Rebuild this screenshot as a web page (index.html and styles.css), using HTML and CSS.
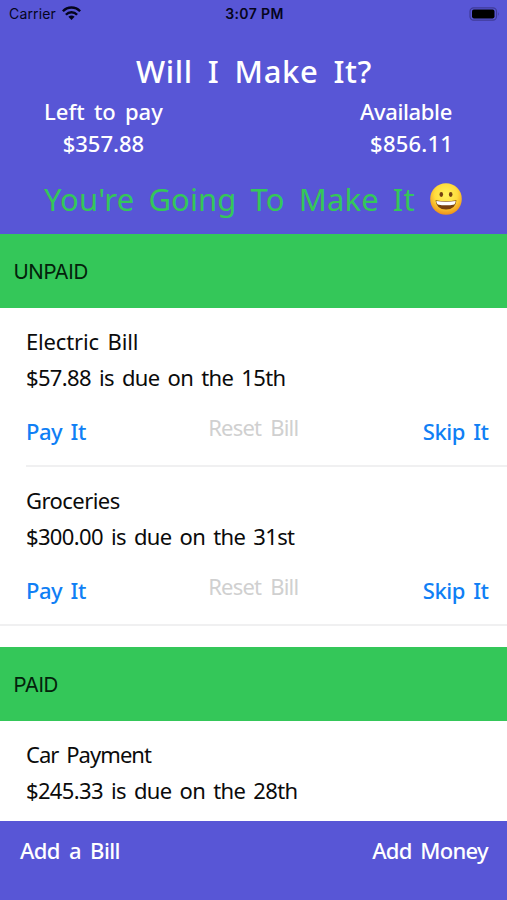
FILE: index.html
```html
<!DOCTYPE html>
<html lang="en">
<head>
<meta charset="utf-8">
<title>Will I Make It?</title>
<link rel="stylesheet" href="styles.css">
</head>
<body>
<div class="app">
  <header class="header">
    <div class="status">
      <div class="carrier"><span>Carrier</span>
        <svg class="wifi" viewBox="0 0 19 14" width="19" height="14"><g fill="none" stroke="#05051c" stroke-width="2.4"><path d="M.9 5.2C5.600.200 13.400.200 18.100 5.200"/><path d="M3.900 8.700C7 5.400 12 5.400 15.100 8.700"/></g><path d="M6.400 10.700Q9.500 8.100 12.600 10.700L9.500 14Z" fill="#05051c"/></svg>
      </div>
      <div class="time">3:07 PM</div>
      <svg class="battery" viewBox="0 0 31 14" width="31" height="14"><rect x="1" y=".8" width="26.500" height="12.400" rx="3.600" fill="none" stroke="#3f3b98" stroke-width="1.200"/><rect x="3" y="2.600" width="22.500" height="8.800" rx="1.800" fill="#000"/><path d="M29 5q1.500 2 0 4z" fill="#3f3b98"/></svg>
    </div>
    <h1 class="title">Will I Make It?</h1>
    <div class="stats">
      <div class="stat stat-left"><div class="left-label">Left to pay</div><div class="left-value">$357.88</div></div>
      <div class="stat stat-right"><div class="right-label">Available</div><div class="right-value">$856.11</div></div>
    </div>
    <div class="message"><span class="message-text">You're Going To Make It</span>
      <svg class="smile" viewBox="0 0 34 34" width="34" height="34"><defs><radialGradient id="face" cx=".5" cy=".36" r=".65"><stop offset="0" stop-color="#fff35c"/><stop offset=".55" stop-color="#ffdc3d"/><stop offset="1" stop-color="#ee8e18"/></radialGradient></defs><circle cx="17" cy="17" r="15.800" fill="url(#face)"/><ellipse cx="12.300" cy="12.500" rx="1.800" ry="2.400" fill="#744212"/><ellipse cx="21.700" cy="12.500" rx="1.800" ry="2.400" fill="#744212"/><path d="M6.500 18.300Q17 20 27.500 18.300Q26.500 27.600 17 27.600T6.500 18.300Z" fill="#77410f"/><path d="M7.300 18.900Q17 20.400 26.700 18.900Q26.500 21.600 25.300 22.500Q17 24.200 8.700 22.500Q7.500 21.600 7.300 18.900Z" fill="#fff"/></svg>
    </div>
  </header>
  <main class="list">
    <h2 class="section">UNPAID</h2>
    <article class="bill">
      <div class="line electric">Electric Bill</div>
      <div class="line due">$57.88 is due on the 15th</div>
      <div class="actions"><span class="pay">Pay It</span><span class="reset">Reset Bill</span><span class="skip">Skip It</span></div>
    </article>
    <article class="bill bill-last">
      <div class="line groceries">Groceries</div>
      <div class="line due">$300.00 is due on the 31st</div>
      <div class="actions"><span class="pay">Pay It</span><span class="reset">Reset Bill</span><span class="skip">Skip It</span></div>
    </article>
    <h2 class="section section-paid">PAID</h2>
    <article class="bill bill-cut">
      <div class="line car">Car Payment</div>
      <div class="line due">$245.33 is due on the 28th</div>
    </article>
  </main>
  <footer class="footer"><span class="add-bill">Add a Bill</span><span class="add-money">Add Money</span></footer>
</div>
</body>
</html>
```
FILE: styles.css
```css
* { box-sizing: border-box; }
body { margin: 0; background: #fff; }
.app {
  width: 507px; height: 900px; overflow: hidden;
  display: flex; flex-direction: column;
  font: 400 22px/36px "Chalkboard SE", "Noto Sans", sans-serif;
  color: #0b0b0b; white-space: nowrap;
}
h1, h2 { margin: 0; font-weight: 400; }
.header { height: 234px; flex: none; background: #5856d6; color: #fff; }
.status {
  height: 28px; padding: 0 7px 0 9px;
  display: grid; grid-template-columns: 1fr auto 1fr; align-items: center;
  font: 400 14px/28px Inter, sans-serif; color: #05051c;
}
.carrier { display: flex; align-items: center; gap: 6px; letter-spacing: .15px; }
.wifi { margin-top: -2px; }
.time { font-weight: 600; letter-spacing: .4px; }
.battery { justify-self: end; margin-top: -1px; }
.title {
  padding: 23px 0 0 136px;
  font-size: 31px; line-height: 40px; font-weight: 500;
  letter-spacing: .6px; word-spacing: 6.500px;
}
.stats {
  display: flex; justify-content: space-between;
  padding: 4px 54px 0 44px; line-height: 32px; font-weight: 500;
}
.stat-left { text-align: center; }
.stat-right { text-align: right; }
.left-label { word-spacing: 3.500px; }
.right-label { letter-spacing: -.35px; padding-right: 1px; }
.right-value { letter-spacing: .2px; }
.message {
  display: flex; align-items: center; justify-content: space-between;
  padding: 0 44px; margin-top: 20px;
  font-size: 31px; line-height: 40px; color: #34c759;
}
.message-text { letter-spacing: .1px; word-spacing: 6px; }
.section {
  height: 73.500px; padding-left: 13.500px; background: #34c759; color: #03220b;
  font: 400 20.500px/75px Inter, sans-serif; letter-spacing: -.4px;
}
.section-paid { margin-top: 21.500px; }
.bill { height: 159px; margin-left: 26px; padding-top: 15.500px; border-bottom: 2px solid #f0f0f1; }
.bill-last { margin-left: 0; padding-left: 26px; }
.bill-cut { height: 100px; border: 0; }
.electric { letter-spacing: -.15px; word-spacing: 3px; }
.due { letter-spacing: -.65px; word-spacing: 3px; }
.groceries { letter-spacing: -.55px; }
.car { letter-spacing: -.95px; word-spacing: 3px; }
.actions {
  display: grid; grid-template-columns: 1fr auto 1fr;
  padding-right: 18.500px; margin-top: 18px;
  color: #107ff5; font-weight: 500; letter-spacing: -.45px; word-spacing: 3px;
}
.reset { margin: -4px 8px 0 0; color: #d0d0d0; font-weight: 400; letter-spacing: -.8px; word-spacing: 4px; }
.skip { justify-self: end; }
.footer {
  height: 79px; flex: none; margin-top: auto; padding: 11px 19px 0 20px;
  display: flex; justify-content: space-between;
  background: #5856d6; color: #fff; font-weight: 500;
}
.add-bill { letter-spacing: -.6px; word-spacing: 4px; }
.add-money { letter-spacing: -.7px; word-spacing: 3.500px; }
```
